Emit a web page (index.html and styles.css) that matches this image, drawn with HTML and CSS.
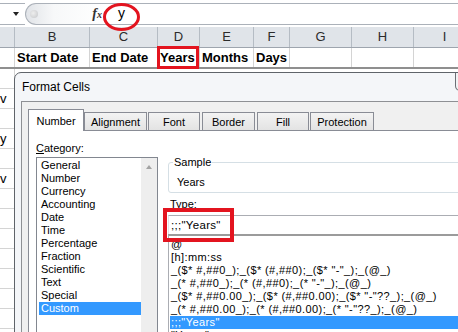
FILE: index.html
```html
<!DOCTYPE html>
<html lang="en">
<head>
  <meta charset="UTF-8" />
  <title>Format Cells</title>
  <link rel="stylesheet" href="styles.css">
</head>
<body>
  <div class="sheet">
    <div class="formula-bar">
      <div class="name-box"><span class="drop"></span></div>
      <div class="fx-pill">
        <span class="dot"></span>
        <span class="fx">f<span class="fx-x">x</span></span>
      </div>
      <div class="formula">y<span class="mark-circle"></span></div>
    </div>

    <div class="grid">
      <div class="row col-head">
        <div class="cell"></div>
        <div class="cell">B</div>
        <div class="cell">C</div>
        <div class="cell">D</div>
        <div class="cell">E</div>
        <div class="cell">F</div>
        <div class="cell">G</div>
        <div class="cell">H</div>
        <div class="cell">I</div>
      </div>
      <div class="row titles">
        <div class="cell"></div>
        <div class="cell">Start Date</div>
        <div class="cell">End Date</div>
        <div class="cell marked">Years<span class="mark-box"></span></div>
        <div class="cell">Months</div>
        <div class="cell">Days</div>
        <div class="cell"></div>
        <div class="cell"></div>
        <div class="cell"></div>
      </div>
      <div class="line"><span></span></div>
      <div class="line"><span>v</span></div>
      <div class="line"><span></span></div>
      <div class="line"><span>y</span></div>
      <div class="line"><span></span></div>
      <div class="line"><span>v</span></div>
      <div class="line"><span></span></div>
      <div class="line"><span></span></div>
      <div class="line"><span></span></div>
      <div class="line"><span></span></div>
      <div class="line"><span></span></div>
      <div class="line"><span></span></div>
      <div class="line"><span></span></div>
    </div>
  </div>

  <div class="dialog">
    <div class="title-bar">
      <span class="title">Format Cells</span>
      <span class="close"></span>
    </div>
    <div class="dialog-body">
      <div class="tabs">
        <div class="tab active">Number</div>
        <div class="tab t-align">Alignment</div>
        <div class="tab t-font">Font</div>
        <div class="tab t-border">Border</div>
        <div class="tab t-fill">Fill</div>
        <div class="tab t-prot">Protection</div>
      </div>
      <div class="page">
        <div class="category">
          <div class="label"><u>C</u>ategory:</div>
          <div class="listbox">
            <ul class="items">
              <li>General</li>
              <li>Number</li>
              <li>Currency</li>
              <li>Accounting</li>
              <li>Date</li>
              <li>Time</li>
              <li>Percentage</li>
              <li>Fraction</li>
              <li>Scientific</li>
              <li>Text</li>
              <li>Special</li>
              <li class="selected">Custom</li>
            </ul>
            <div class="scrollbar"><span class="arrow-up"></span></div>
          </div>
        </div>

        <div class="details">
          <fieldset class="sample">
            <legend>Sample</legend>
            <div class="sample-value">Years</div>
          </fieldset>
          <div class="label type-label">Type:</div>
          <div class="type-field">
            <div class="type-input">;;;"Years"</div>
            <span class="mark-type"></span>
          </div>
          <ul class="type-list">
            <li>@</li>
            <li>[h]:mm:ss</li>
            <li>_($* #,##0_);_($* (#,##0);_($* "-"_);_(@_)</li>
            <li>_(* #,##0_);_(* (#,##0);_(* "-"_);_(@_)</li>
            <li>_($* #,##0.00_);_($* (#,##0.00);_($* "-"??_);_(@_)</li>
            <li>_(* #,##0.00_);_(* (#,##0.00);_(* "-"??_);_(@_)</li>
            <li class="selected">;;;"Years"</li>
            <li>  "Years"</li>
          </ul>
        </div>
      </div>
    </div>
  </div>
</body>
</html>
```

FILE: styles.css
```css
* {
  margin: 0;
  padding: 0;
  box-sizing: border-box;
}

body {
  width: 458px;
  height: 332px;
  overflow: hidden;
  position: relative;
  background: #fff;
  font-family: "Liberation Sans", Arial, sans-serif;
  color: #000;
}

/* Formula bar */
.formula-bar {
  display: flex;
  height: 27px;
  padding-top: 3px;
}

.name-box,
.fx-pill,
.formula {
  height: 22px;
  border-top: 1px solid #abb1b9;
  border-bottom: 1px solid #abb1b9;
}

.name-box {
  width: 25px;
  display: flex;
  align-items: center;
  justify-content: flex-end;
  padding-right: 6px;
}

.drop {
  width: 0;
  height: 0;
  border-left: 3.5px solid transparent;
  border-right: 3.5px solid transparent;
  border-top: 4px solid #222;
}

.fx-pill {
  width: 80px;
  border-left: 1px solid #abb1b9;
  border-radius: 11px 0 0 11px;
  background: linear-gradient(to right, #e1e4e8, #f7f8f9 35%, #fff);
  display: flex;
  align-items: center;
}

.dot {
  width: 8px;
  height: 8px;
  margin-left: 4px;
  border-radius: 50%;
  background: radial-gradient(circle at 40% 40%, #eee, #c4c6c9);
}

.fx {
  margin-left: auto;
  margin-right: 3px;
  font-family: "Liberation Serif", serif;
  font-style: italic;
  font-weight: bold;
  font-size: 14px;
  color: #333;
}

.fx-x {
  font-size: 10px;
}

.formula {
  flex: 1;
  position: relative;
  padding-left: 13px;
  font-size: 14px;
  line-height: 19px;
}

.mark-circle {
  position: absolute;
  left: -2px;
  top: -1px;
  width: 37px;
  height: 28px;
  border: 3.5px solid #e3141f;
  border-radius: 50%;
  z-index: 3;
}

/* Sheet grid */
.row {
  display: grid;
  grid-template-columns: 15px 75px 68px 42px 54px 36px 62px 62px 62px;
}

.cell {
  border-right: 1px solid #d4d4d4;
  white-space: nowrap;
  overflow: hidden;
}

.col-head {
  height: 21px;
  background: #e0e4e9;
  border-bottom: 1px solid #9ea5ae;
}

.col-head .cell {
  border-right-color: #b5bcc4;
  text-align: center;
  font-size: 13px;
  line-height: 20px;
  color: #2b2b2b;
}

.titles {
  height: 21px;
  border-bottom: 2px solid #8f8f8f;
}

.titles .cell {
  padding-left: 2px;
  font-size: 13px;
  font-weight: bold;
  line-height: 19px;
}

.titles .marked {
  position: relative;
  overflow: visible;
}

.mark-box {
  position: absolute;
  left: -1px;
  right: 0;
  top: -2px;
  bottom: -2px;
  border: 3px solid #e3141f;
}

.line {
  height: 20px;
  border-bottom: 1px solid #d4d4d4;
}

.line span {
  display: block;
  width: 15px;
  height: 19px;
  border-right: 1px solid #d4d4d4;
  padding-right: 8px;
  text-align: right;
  font-size: 13px;
  line-height: 19px;
  white-space: nowrap;
}

/* Dialog */
.dialog {
  position: absolute;
  left: 14px;
  top: 72px;
  width: 491px;
  height: 290px;
  border: 1px solid #5f646a;
  border-radius: 7px 7px 0 0;
  background: #f4f6f9;
  padding-left: 6px;
  font-size: 11px;
}

.title-bar {
  display: flex;
  align-items: flex-start;
  height: 28px;
  padding-right: 6px;
}

.title {
  padding-left: 1px;
  font-size: 12px;
  line-height: 28px;
}

.close {
  margin-left: auto;
  width: 43px;
  height: 18px;
  border: 1px solid #6b6f75;
  border-top: none;
  border-radius: 0 0 5px 5px;
  background: #f1f2f4;
}

.dialog-body {
  height: 100%;
  border-top: 1px solid #8e9094;
  border-left: 1px solid #8e9094;
  background: #f0f0f0;
  padding: 7px 0 0 6px;
}

.tabs {
  display: flex;
  align-items: flex-end;
  height: 21px;
}

.tab {
  height: 18px;
  border: 1px solid #898c95;
  border-bottom: none;
  background: linear-gradient(#f3f3f3, #e3e3e3);
  text-align: center;
  line-height: 18px;
}

.tab.active {
  height: 22px;
  width: 56px;
  margin-bottom: -1px;
  position: relative;
  z-index: 1;
  background: #fff;
  line-height: 23px;
}

.t-align { width: 63px; margin-left: 0; }
.t-font { width: 52px; margin-left: 1px; }
.t-border { width: 53px; margin-left: 2px; }
.t-fill { width: 52px; margin-left: 2px; }
.t-prot { width: 64px; margin-left: 1px; }

.page {
  display: flex;
  gap: 10px;
  height: 100%;
  border-top: 1px solid #898c95;
  border-left: 1px solid #898c95;
  background: #fff;
  padding-left: 7px;
}

.label {
  line-height: 13px;
}

.category {
  width: 122px;
}

.category .label {
  margin-top: 11px;
}

.listbox {
  display: flex;
  height: 180px;
  margin-top: 2px;
  border: 1px solid #828790;
}

.items {
  list-style: none;
  flex: 1;
  padding-top: 1px;
}

.items li,
.type-list li {
  line-height: 13px;
  white-space: nowrap;
}

.items li {
  margin: 0 0 0 2px;
  padding-left: 2px;
}

li.selected {
  background: #3399ff;
  color: #fff;
}

.scrollbar {
  width: 16px;
  background: #eeeeee;
  display: flex;
  justify-content: center;
  padding-top: 7px;
}

.arrow-up {
  width: 0;
  height: 0;
  border-left: 3.5px solid transparent;
  border-right: 3.5px solid transparent;
  border-bottom: 4px solid #a3a3a3;
}

.details {
  flex: 1;
  min-width: 0;
}

.sample {
  margin-top: 25px;
  border: 1px solid #d5dfe5;
  border-radius: 3px;
  padding: 0 8px 3px 8px;
  min-width: 0;
}

.sample legend {
  padding: 0 1px;
  margin-left: -4px;
  line-height: 13px;
}

.sample-value {
  margin-top: 7px;
  line-height: 13px;
}

.type-label {
  margin-top: 5px;
  padding-left: 2px;
}

.type-field {
  position: relative;
  margin-top: 4px;
}

.type-input {
  height: 19px;
  border-top: 1px solid #abadb3;
  border-left: 1px solid #e2e3ea;
  padding-left: 2px;
  font-size: 11.5px;
  letter-spacing: 0.3px;
  line-height: 19px;
}

.mark-type {
  position: absolute;
  left: -5px;
  top: -7px;
  width: 71px;
  height: 34px;
  border: 4px solid #e3141f;
}

.type-list {
  list-style: none;
  height: 120px;
  border-top: 2px solid #9b9b9b;
  border-left: 1px solid #abadb3;
  padding-top: 2px;
}

.type-list li {
  margin-left: 1px;
  padding-left: 1px;
  letter-spacing: 0.4px;
}
```
